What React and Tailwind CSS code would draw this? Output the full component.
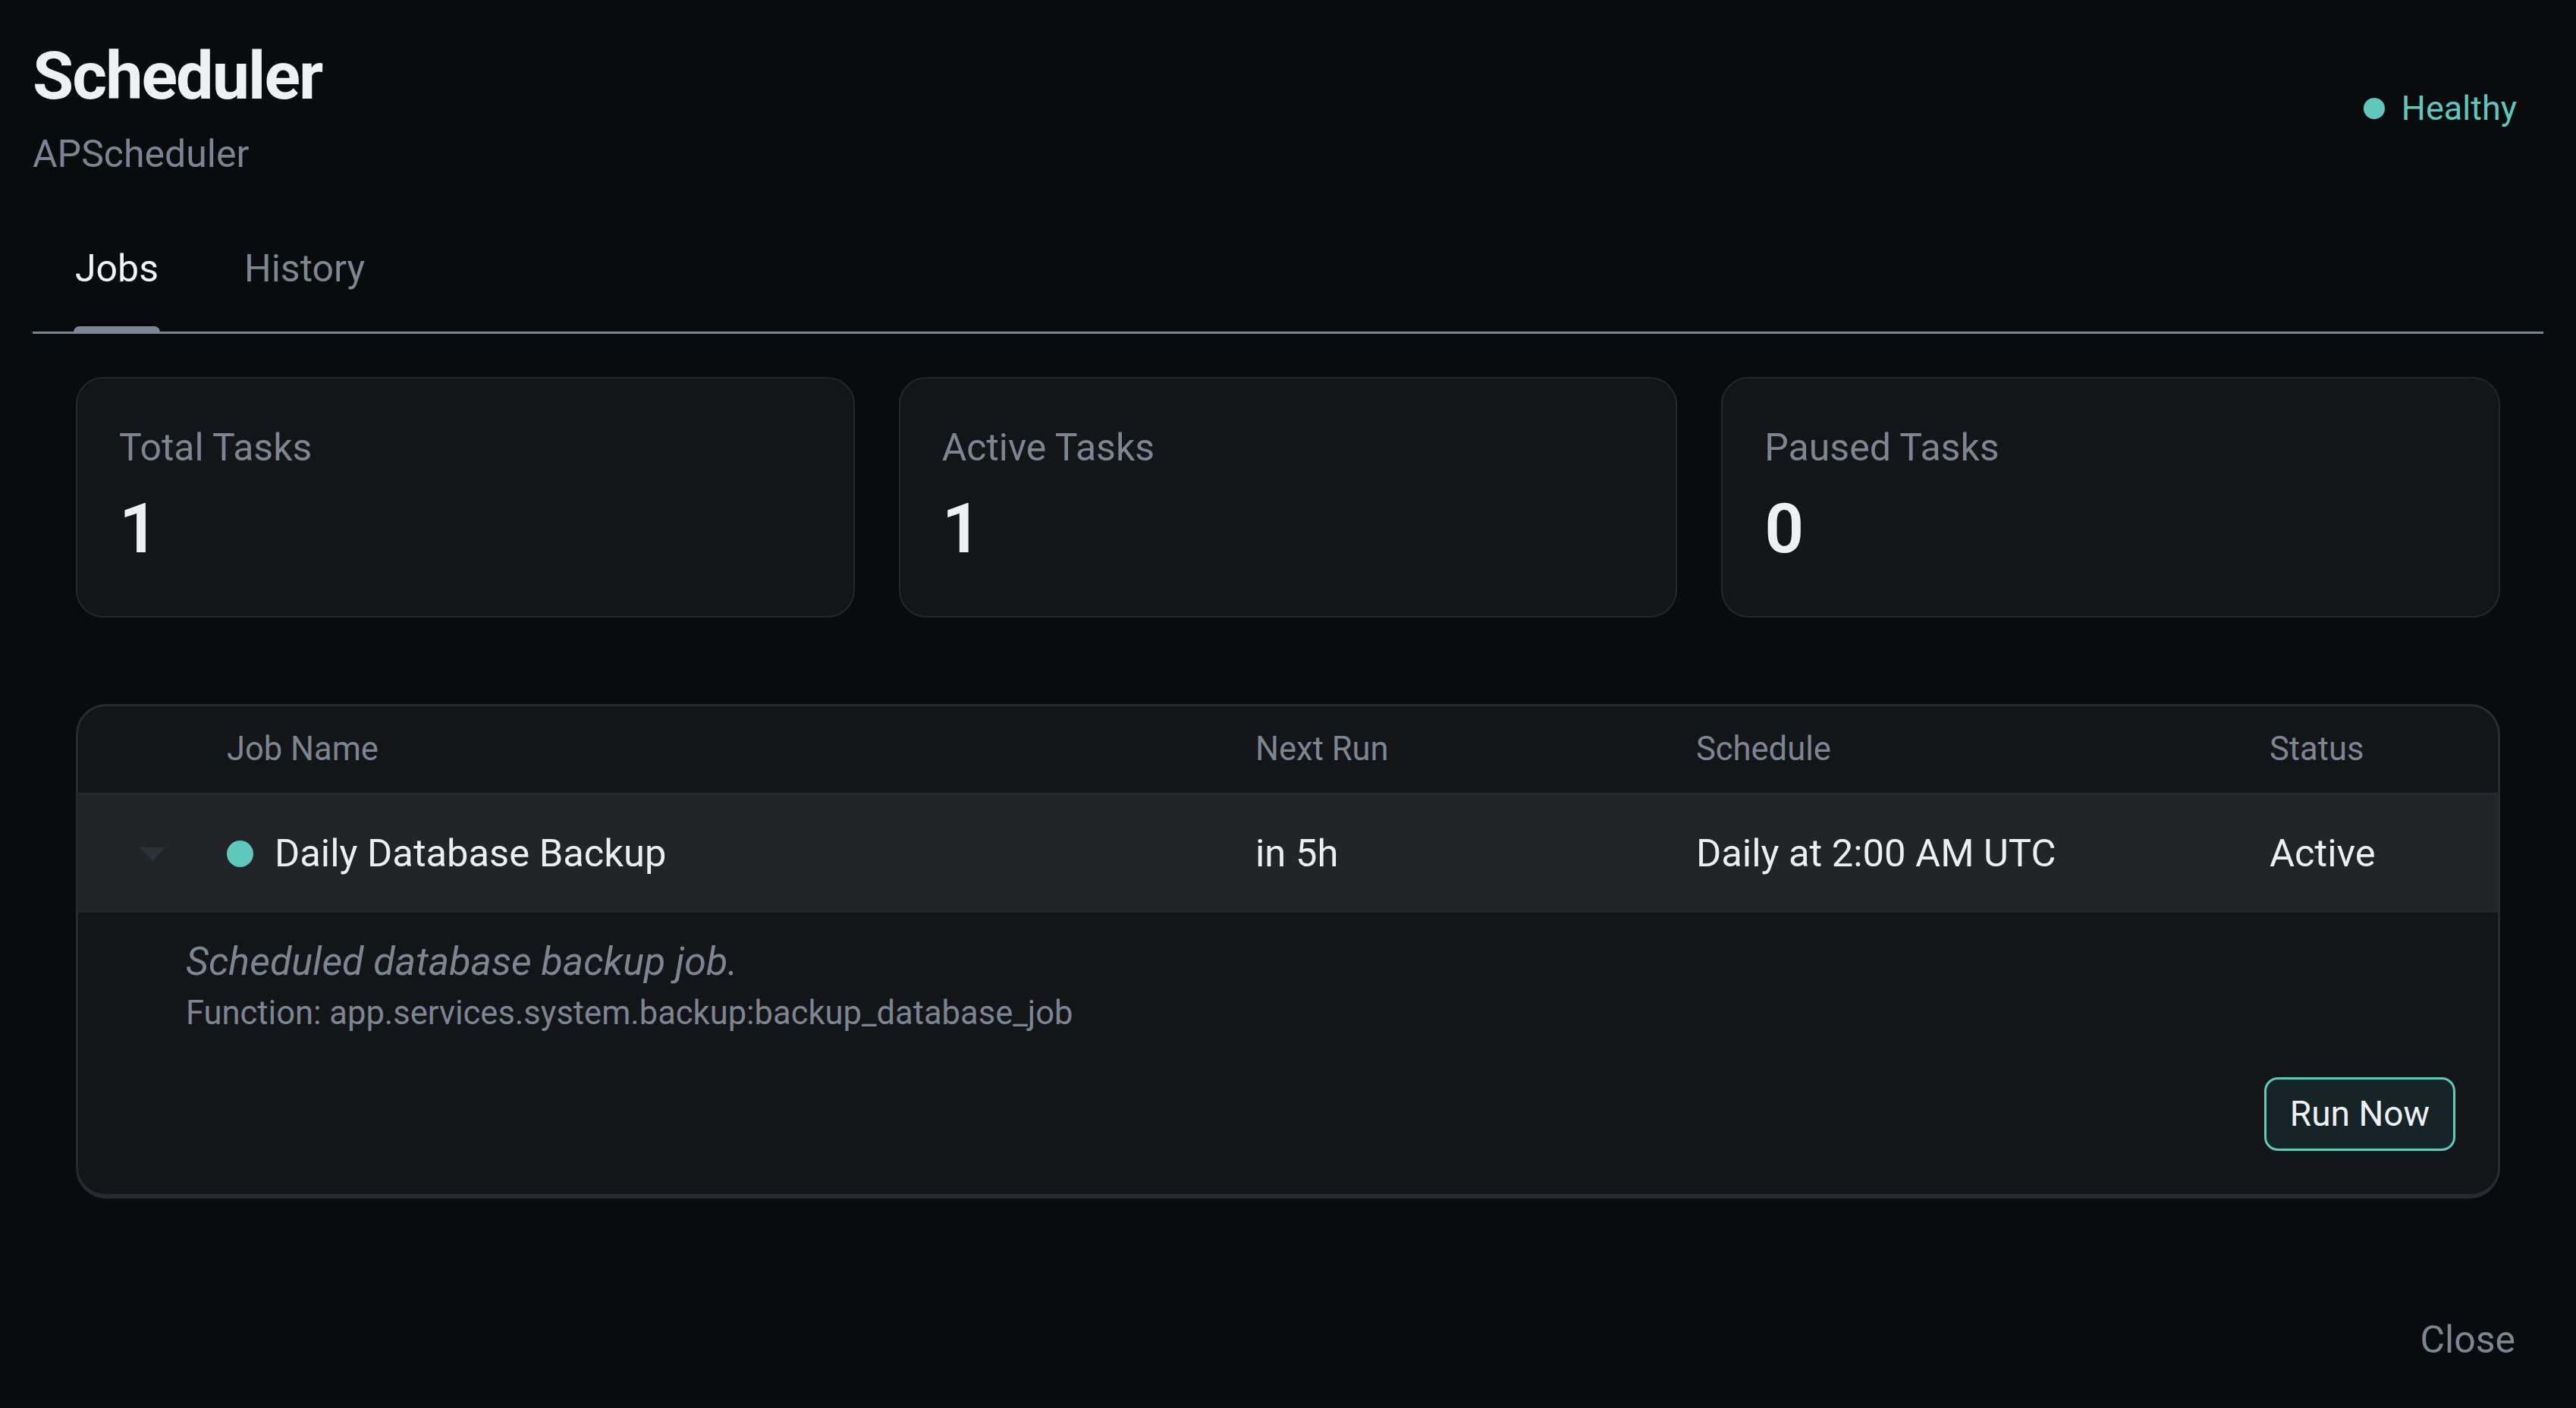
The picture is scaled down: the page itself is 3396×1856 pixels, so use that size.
import { useState } from "react";

const stats = [
  { label: "Total Tasks", value: 1 },
  { label: "Active Tasks", value: 1 },
  { label: "Paused Tasks", value: 0 },
];

const cols = "grid grid-cols-[196px_1356px_581px_756px_1fr]";

function StatCard({ label, value }) {
  return (
    <div className="rounded-[36px] border-2 border-[#25272d] bg-[#141519] pl-[55px] pt-[55px] pb-[60px]">
      <div className="text-[50px] leading-[72px] text-[#7d8592]">{label}</div>
      <div className="mt-[17px] text-[91px] font-semibold leading-[109px] text-[#eef1f4]">
        {value}
      </div>
    </div>
  );
}

export default function App() {
  const [tab, setTab] = useState("jobs");

  return (
    <div className="min-h-screen bg-[#0a0b0d] px-[43px] pt-[46px] font-['Roboto','Liberation_Sans',sans-serif]">
      {/* header */}
      <div className="flex items-center justify-between">
        <div>
          <h1 className="text-[88px] font-bold leading-[108px] tracking-[-0.022em] text-[#eef1f4]">Scheduler</h1>
          <div className="mt-[14px] text-[50px] leading-[71px] text-[#7a8494]">APScheduler</div>
        </div>
        <div className="flex items-center gap-[22px] pr-[35px]">
          <span className="h-[28px] w-[28px] rounded-full bg-[#5ec8bd]" />
          <span className="text-[45px] leading-[68px] text-[#5ec8bd]">Healthy</span>
        </div>
      </div>

      {/* tabs */}
      <div className="mt-[79px] flex gap-[113px] border-b-[3px] border-[#7d8793] pl-[56px]">
        {[
          ["jobs", "Jobs"],
          ["history", "History"],
        ].map(([key, name]) => (
          <button
            key={key}
            onClick={() => setTab(key)}
            className={
              "relative pb-[47px] text-[50px] leading-[72px] " +
              (tab === key ? "text-[#f1f3f5]" : "text-[#7d8793]")
            }
          >
            {name}
            {tab === key && (
              <span className="absolute bottom-[-3px] left-[-2px] right-[-2px] h-[10px] rounded-t-[8px] bg-[#7d8793]" />
            )}
          </button>
        ))}
      </div>

      <div className="px-[57px]">
        {/* stats */}
        <div className="mt-[57px] grid grid-cols-3 gap-[58px]">
          {stats.map(s => (
            <StatCard key={s.label} {...s} />
          ))}
        </div>

        {/* jobs table */}
        <div className="mt-[114px] overflow-hidden rounded-[40px] border-[3px] border-b-[6px] border-[#262a31] bg-[#141519]">
          <div className={cols + " h-[117px] items-center border-b-[3px] border-[#262a31] text-[43.5px] text-[#7d8592]"}>
            <div />
            <div>Job Name</div>
            <div>Next Run</div>
            <div>Schedule</div>
            <div>Status</div>
          </div>
          <div className={cols + " h-[155px] items-center bg-[#222428] text-[50.7px] text-[#eceef1]"}>
            <div className="flex justify-center">
              <svg width="34" height="18" viewBox="0 0 34 18">
                <path d="M0 0 L34 0 L17 18 Z" fill="#2c313a" />
              </svg>
            </div>
            <div className="flex items-center gap-[28px]">
              <span className="h-[35px] w-[35px] rounded-full bg-[#5ec8bd]" />
              <span>Daily Database Backup</span>
            </div>
            <div>in 5h</div>
            <div>Daily at 2:00 AM UTC</div>
            <div>Active</div>
          </div>
          <div className="pl-[142px] pr-[56px] pt-[29px] pb-[57px]">
            <div className="text-[52px] italic leading-[72px] text-[#7d8592]">
              Scheduled database backup job.
            </div>
            <div className="text-[43.5px] leading-[64px] text-[#7d8592]">
              Function: app.services.system.backup:backup_database_job
            </div>
            <div className="mt-[52px] flex justify-end">
              <button className="h-[97px] rounded-[18px] border-[3px] border-[#5ec8bd] bg-[#172427] px-[31px] text-[46px] text-[#eef1f4]">
                Run Now
              </button>
            </div>
          </div>
        </div>
      </div>

      {/* footer */}
      <div className="mt-[150px] flex justify-end pr-[37px]">
        <button className="text-[50px] leading-[72px] text-[#7d8592]">Close</button>
      </div>
    </div>
  );
}
